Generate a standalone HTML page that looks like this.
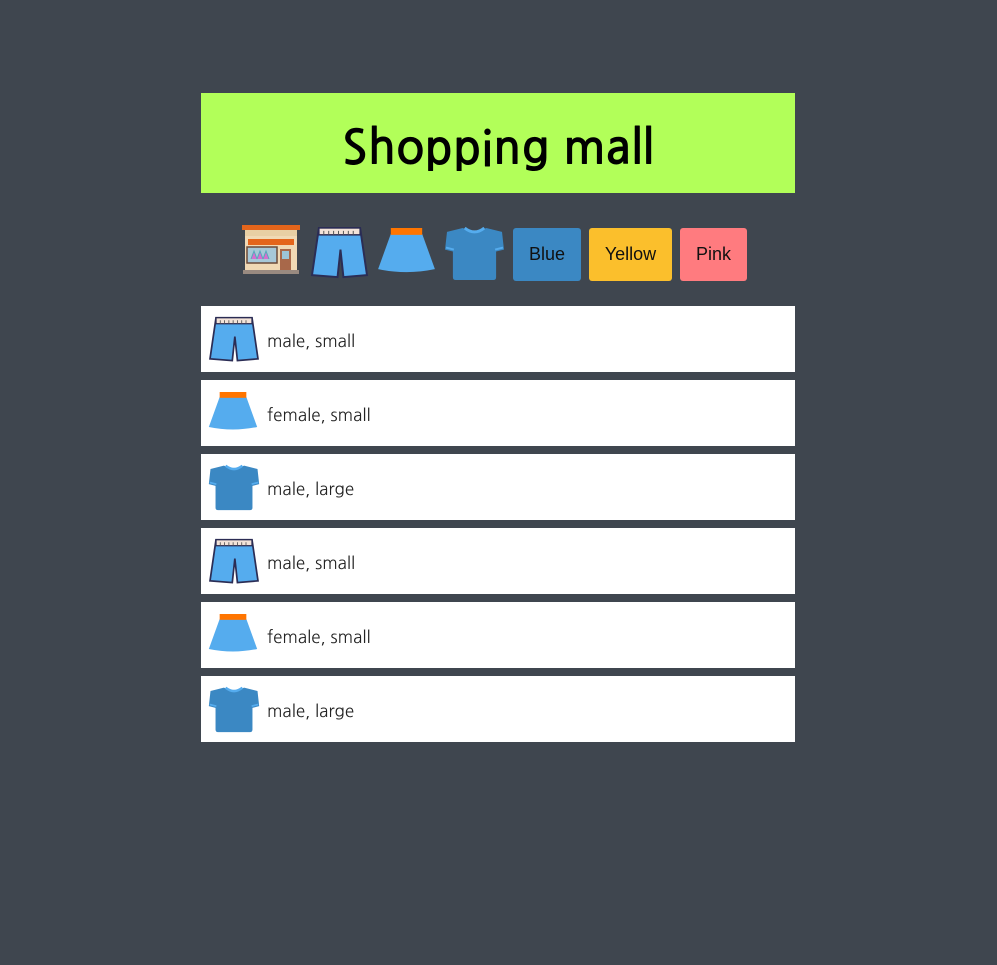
<!DOCTYPE html>
<html><head><meta charset="utf-8"><style>
html,body{margin:0;padding:0;background:#3f464f;width:997px;height:965px;overflow:hidden;font-family:"Liberation Sans","Noto Sans CJK KR",sans-serif;}
.wrap{position:absolute;left:201px;top:93px;width:594px;}
.head{height:100px;background:#b2ff59;display:flex;align-items:center;justify-content:center;}
.head h1{margin:0;font-size:47px;font-weight:bold;color:#000;font-family:"NanumGothic","Liberation Sans",sans-serif;position:relative;top:5px;}
.ic{position:absolute;}
.btn{position:absolute;top:228px;height:53px;border-radius:3px;display:flex;align-items:center;justify-content:center;font-size:18px;color:#111;}
.item{position:absolute;left:201px;width:594px;height:66px;background:#fff;}
.item svg{position:absolute;left:7px;top:8px;}
.item span{position:absolute;left:66px;top:25px;font-size:17px;color:#222;font-family:"NanumGothic","Liberation Sans",sans-serif;}
</style></head><body>
<svg width="0" height="0" style="position:absolute">
<defs>
<symbol id="pants" viewBox="0 0 60 56"><path d="M9 2 H51 L58 50 L34 52 L31 24 L28 52 L2 50 Z" fill="#55acee" stroke="#2b2d55" stroke-width="2"/><rect x="9" y="2" width="42" height="7" fill="#f3e3d8" stroke="#2b2d55" stroke-width="1.5"/><path d="M14 5v4M19 5v4M24 5v4M29 5v4M34 5v4M39 5v4M44 5v4" stroke="#555" stroke-width="1"/></symbol>
<symbol id="skirt" viewBox="0 0 60 48"><path d="M14 6 H46 L59 42 Q30 48 1 42 Z" fill="#55acee"/><rect x="14" y="0" width="32" height="7" fill="#ff7500"/></symbol>
<symbol id="tee" viewBox="0 0 60 56"><path d="M18 2 Q30 8 42 2 L58 6 L60 24 L52 26 L52 52 Q52 55 49 55 H11 Q8 55 8 52 L8 26 L0 24 L2 6 Z" fill="#3b88c3"/><path d="M20 2 Q30 10 40 2" stroke="#55acee" stroke-width="3" fill="none"/><path d="M1 22 L9 24 M59 22 L51 24" stroke="#55acee" stroke-width="2"/></symbol>
</defs></svg>
<div class="wrap"><div class="head"><h1>Shopping mall</h1></div></div>

<svg class="ic" style="left:242px;top:225px" width="58" height="50" viewBox="0 0 58 50">
<rect x="0" y="0" width="58" height="5" fill="#e4651b"/>
<rect x="3" y="5" width="52" height="40" fill="#f0d9b5"/>
<rect x="3" y="5" width="52" height="6" fill="#e8cfa4"/>
<rect x="6" y="14" width="46" height="6" fill="#e4651b"/>
<rect x="5" y="22" width="30" height="16" fill="#a7c8d8" stroke="#6b4a3a" stroke-width="1.5"/>
<path d="M9 34 l3-8 3 8 M15 34 l3-8 3 8 M21 34 l3-8 3 8" fill="#d66fd0" stroke="#5ab"/>
<rect x="38" y="24" width="11" height="24" fill="#a8684a"/>
<rect x="40" y="26" width="7" height="8" fill="#9cc4d8"/>
<rect x="1" y="45" width="56" height="4" fill="#998a80"/>
</svg>
<svg class="ic" style="left:309px;top:226px" width="61" height="55"><use href="#pants"/></svg>
<svg class="ic" style="left:377px;top:228px" width="59" height="47"><use href="#skirt"/></svg>
<svg class="ic" style="left:444px;top:226px" width="61" height="55"><use href="#tee"/></svg>

<div class="btn" style="left:513px;width:68px;background:#3b88c3;">Blue</div>
<div class="btn" style="left:589px;width:83px;background:#fbbf2c;">Yellow</div>
<div class="btn" style="left:680px;width:67px;background:#ff7b7f;">Pink</div>

<div class="item" style="top:306px"><svg width="52" height="48" style="top:10px"><use href="#pants"/></svg><span>male, small</span></div>
<div class="item" style="top:380px"><svg width="50" height="40" style="top:12px"><use href="#skirt"/></svg><span>female, small</span></div>
<div class="item" style="top:454px"><svg width="52" height="47" style="top:10px"><use href="#tee"/></svg><span>male, large</span></div>
<div class="item" style="top:528px"><svg width="52" height="48" style="top:10px"><use href="#pants"/></svg><span>male, small</span></div>
<div class="item" style="top:602px"><svg width="50" height="40" style="top:12px"><use href="#skirt"/></svg><span>female, small</span></div>
<div class="item" style="top:676px"><svg width="52" height="47" style="top:10px"><use href="#tee"/></svg><span>male, large</span></div>
</body></html>
